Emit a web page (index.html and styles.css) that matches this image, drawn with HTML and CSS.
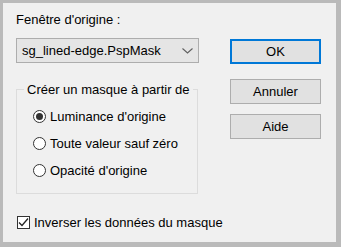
FILE: index.html
```html
<!DOCTYPE html>
<html lang="fr">
<head>
  <meta charset="UTF-8" />
  <title>Masque</title>
  <link rel="stylesheet" href="styles.css">
</head>
<body>
  <div class="dialog">
    <div class="left">
      <div class="caption">Fenêtre d'origine :</div>
      <div class="select">
        <span>sg_lined-edge.PspMask</span>
        <svg class="chevron" width="11" height="6" viewBox="0 0 11 6"><path d="M0.5 0.5 L5.5 5 L10.5 0.5" fill="none" stroke="#606060" stroke-width="1.1"/></svg>
      </div>

      <!-- source group -->
      <div class="group">
        <div class="legend">Créer un masque à partir de</div>
        <div class="radio-row"><span class="radio checked"></span>Luminance d'origine</div>
        <div class="radio-row"><span class="radio"></span>Toute valeur sauf zéro</div>
        <div class="radio-row"><span class="radio"></span>Opacité d'origine</div>
      </div>

      <div class="check-row">
        <span class="check">
          <svg width="11" height="11" viewBox="0 0 11 11"><path d="M1 5.5 L4 8.5 L10 1.5" fill="none" stroke="#222" stroke-width="1.3"/></svg>
        </span>
        Inverser les données du masque
      </div>
    </div>

    <div class="right">
      <button class="btn default">OK</button>
      <button class="btn">Annuler</button>
      <button class="btn aide">Aide</button>
    </div>
  </div>
</body>
</html>
```

FILE: styles.css
```css
* {
  box-sizing: border-box;
}

body {
  margin: 0;
  font-family: "Liberation Sans", Arial, sans-serif;
  font-size: 13px;
  color: #000;
}

.dialog {
  width: 341px;
  height: 247px;
  background: #f0f0f0;
  border-style: solid;
  border-color: #bababa;
  border-width: 3px 5px 5px 3px;
  padding: 9px 15px 0 13px;
  display: flex;
  gap: 31px;
}

.left {
  width: 183px;
  display: flex;
  flex-direction: column;
}

.caption {
  line-height: 15px;
}

.select {
  margin-top: 11px;
  height: 25px;
  border: 1px solid #adadad;
  background: #e5e5e5;
  display: flex;
  align-items: center;
  justify-content: space-between;
  padding: 0 5px 0 5px;
}

.group {
  position: relative;
  margin-top: 26px;
  height: 105px;
  width: 182px;
  border: 1px solid #dcdcdc;
  padding: 18px 0 0 16px;
}

.legend {
  position: absolute;
  top: -8px;
  left: 7px;
  padding: 0 3px;
  background: #f0f0f0;
  line-height: 15px;
}

.radio-row {
  display: flex;
  align-items: center;
  gap: 4px;
  height: 16px;
  margin-bottom: 11px;
}

.radio {
  width: 13px;
  height: 13px;
  border: 1px solid #333;
  border-radius: 50%;
  background: #fff;
  display: flex;
  align-items: center;
  justify-content: center;
}

.radio.checked::after {
  content: "";
  width: 7px;
  height: 7px;
  border-radius: 50%;
  background: #333;
}

.check-row {
  margin-top: 21px;
  display: flex;
  align-items: center;
  gap: 4px;
  margin-left: 1px;
  white-space: nowrap;
}

.check {
  flex: none;
  width: 13px;
  height: 13px;
  border: 1px solid #333;
  background: #fff;
  display: flex;
  align-items: center;
  justify-content: center;
}

.right {
  display: flex;
  flex-direction: column;
  padding-top: 27px;
}

.btn {
  width: 91px;
  height: 25px;
  border: 1px solid #adadad;
  background: #e1e1e1;
  font-family: inherit;
  font-size: 13px;
  color: #000;
  padding: 0;
  margin-bottom: 15px;
}

.btn.default {
  border: 2px solid #0078d7;
}

.btn.aide {
  margin-top: -5px;
}
```
